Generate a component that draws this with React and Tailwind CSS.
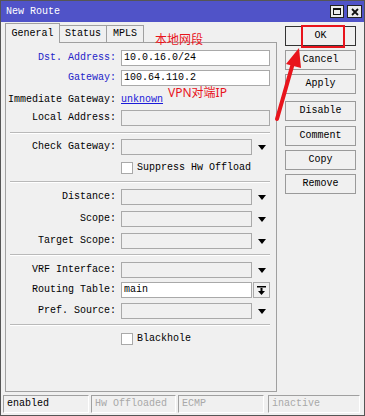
import React from 'react';

const mono = { fontFamily: '"Liberation Mono", "DejaVu Sans Mono", monospace' };

const Arrow = () => (
  <svg width="8" height="5" viewBox="0 0 8 5">
    <path d="M0 0 L8 0 L4 5 Z" fill="#000" />
  </svg>
);

const Field = ({ label, value, white, blue, kind, mt }) => (
  <div className={`flex items-center h-[16px] ${mt}`}>
    <div className={`w-[111px] text-right pr-[1px] text-[10px] leading-none ${blue ? 'text-[#2323c8]' : 'text-black'}`}>
      {label}
    </div>
    <div
      className={`ml-[4px] h-[16px] border border-[#a9a9a9] flex items-center pl-[2px] text-[10px] leading-none text-black
        ${kind ? 'w-[131px]' : 'w-[149px]'} ${white ? 'bg-white' : 'bg-[#f0f0f0]'}`}
    >
      {value}
    </div>
    {kind === 'drop' && (
      <div className="w-[18px] h-[16px] flex items-center justify-center pl-[2px]">
        <Arrow />
      </div>
    )}
    {kind === 'pin' && (
      <div className="ml-[1px] w-[17px] h-[16px] border border-[#a9a9a9] bg-[#f0f0f0] flex items-center justify-center">
        <svg width="9" height="9" viewBox="0 0 9 9">
          <rect x="0" y="0" width="9" height="1.5" fill="#000" />
          <rect x="3.5" y="2" width="2" height="3" fill="#000" />
          <path d="M1 5 L8 5 L4.5 9 Z" fill="#000" />
        </svg>
      </div>
    )}
  </div>
);

const Check = ({ label, mt }) => (
  <div className={`flex items-center h-[14px] ${mt}`}>
    <div className="ml-[115px] w-[12px] h-[12px] border border-[#a9a9a9] bg-white" />
    <span className="ml-[4px] text-[10px] leading-none text-black">{label}</span>
  </div>
);

const Sep = ({ mt }) => (
  <div className={`ml-[4px] w-[260px] h-[2px] border-t border-[#b9b9b9] border-b border-b-white ${mt}`} />
);

const Btn = ({ label, def, mt }) => (
  <button
    className={`w-[71px] h-[20px] bg-[#f0f0f0] text-[10px] leading-none text-black border ${def ? 'border-[#333]' : 'border-[#9a9a9a]'} ${mt}`}
  >
    {label}
  </button>
);

const Status = ({ text, w, ml, gray }) => (
  <div
    className={`h-[18px] border border-[#a0a0a0] border-r-white border-b-white flex items-center pl-[3px] text-[10px] leading-none ${w} ${ml} ${gray ? 'text-[#a8a8a8]' : 'text-black'}`}
  >
    {text}
  </div>
);

export default function App() {
  return (
    <div className="relative w-[365px] h-[416px] bg-[#f0f0f0] border border-[#555] flex flex-col overflow-hidden" style={mono}>
      {/* Title bar */}
      <div className="h-[21px] bg-[#5053c8] flex items-center pl-[5px]">
        <span className="text-white text-[10px] leading-none">New Route</span>
        <div className="ml-auto flex items-center gap-[3px] pr-[2px]">
          <div className="w-[14px] h-[13px] bg-[#ececec] border border-[#222] flex items-center justify-center">
            <div className="w-[8px] h-[7px] border border-[#111] border-t-2" />
          </div>
          <div className="w-[15px] h-[13px] bg-[#ececec] border border-[#222] flex items-center justify-center">
            <svg width="8" height="8" viewBox="0 0 8 8">
              <path d="M1 1 L7 7 M7 1 L1 7" stroke="#111" strokeWidth="1.8" />
            </svg>
          </div>
        </div>
      </div>

      <div className="flex flex-1">
        {/* Left: tabs + panel */}
        <div className="ml-[4px] flex flex-col">
          <div className="flex items-end mt-[1px] h-[19px]">
            <div className="relative z-10 h-[20px] w-[55px] border border-[#a0a0a0] border-b-0 bg-[#f0f0f0] flex items-center justify-center text-[10px] leading-none -mb-[1px]">
              General
            </div>
            <div className="h-[17px] w-[47px] border border-[#a0a0a0] border-l-0 border-b-0 bg-[#f0f0f0] flex items-center justify-center text-[10px] leading-none">
              Status
            </div>
            <div className="h-[17px] w-[37px] border border-[#a0a0a0] border-l-0 border-b-0 bg-[#f0f0f0] flex items-center justify-center text-[10px] leading-none">
              MPLS
            </div>
          </div>
          <div className="w-[272px] h-[350px] border border-[#a0a0a0] flex flex-col">
            <Field label="Dst. Address:" value="10.0.16.0/24" white blue mt="mt-[7px]" />
            <Field label="Gateway:" value="100.64.110.2" white blue mt="mt-[4px]" />
            <div className="flex items-center h-[14px] mt-[7px]">
              <div className="w-[111px] text-right pr-[1px] text-[10px] leading-none">Immediate Gateway:</div>
              <span className="ml-[4px] text-[10px] leading-none text-[#1a1ad8] underline">unknown</span>
            </div>
            <Field label="Local Address:" value="" mt="mt-[3px]" />
            <Sep mt="mt-[6px]" />
            <Field label="Check Gateway:" value="" kind="drop" mt="mt-[5px]" />
            <Check label="Suppress Hw Offload" mt="mt-[6px]" />
            <Sep mt="mt-[6px]" />
            <Field label="Distance:" value="" kind="drop" mt="mt-[6px]" />
            <Field label="Scope:" value="" kind="drop" mt="mt-[6px]" />
            <Field label="Target Scope:" value="" kind="drop" mt="mt-[6px]" />
            <Sep mt="mt-[5px]" />
            <Field label="VRF Interface:" value="" kind="drop" mt="mt-[6px]" />
            <Field label="Routing Table:" value="main" white kind="pin" mt="mt-[4px]" />
            <Field label="Pref. Source:" value="" kind="drop" mt="mt-[5px]" />
            <Sep mt="mt-[5px]" />
            <Check label="Blackhole" mt="mt-[6px]" />
          </div>
        </div>

        {/* Right: buttons */}
        <div className="ml-[8px] flex flex-col">
          <Btn label="OK" def mt="mt-[4px]" />
          <Btn label="Cancel" mt="mt-[4px]" />
          <Btn label="Apply" mt="mt-[4px]" />
          <Btn label="Disable" mt="mt-[7px]" />
          <Btn label="Comment" mt="mt-[5px]" />
          <Btn label="Copy" mt="mt-[4px]" />
          <Btn label="Remove" mt="mt-[4px]" />
        </div>
      </div>

      {/* Status bar */}
      <div className="flex h-[22px] items-start pt-[2px] pl-[2px]">
        <Status text="enabled" w="w-[86px]" ml="" />
        <Status text="Hw Offloaded" w="w-[85px]" ml="ml-[2px]" gray />
        <Status text="ECMP" w="w-[86px]" ml="ml-[2px]" gray />
        <Status text="inactive" w="w-[92px]" ml="ml-[4px]" gray />
      </div>

      {/* Annotations */}
      <div className="absolute left-[300px] top-[24px] w-[44px] h-[23px] border-2 border-[#e8141c]" />
      <div className="absolute left-[154px] top-[32px] text-[12px] leading-none text-[#e8141c]" style={{ fontFamily: '"Noto Sans CJK SC", sans-serif' }}>
        本地网段
      </div>
      <div className="absolute left-[167px] top-[86px] text-[12px] leading-none text-[#e8141c]" style={{ fontFamily: '"Noto Sans", "Noto Sans CJK SC", sans-serif' }}>
        VPN对端IP
      </div>
      <svg className="absolute left-0 top-0" width="365" height="416" viewBox="0 0 365 416">
        <path d="M276 118 L292 62" stroke="#e8141c" strokeWidth="4" strokeLinecap="round" />
        <path d="M298 47 L300 67 L285 63 Z" fill="#e8141c" />
      </svg>
    </div>
  );
}
